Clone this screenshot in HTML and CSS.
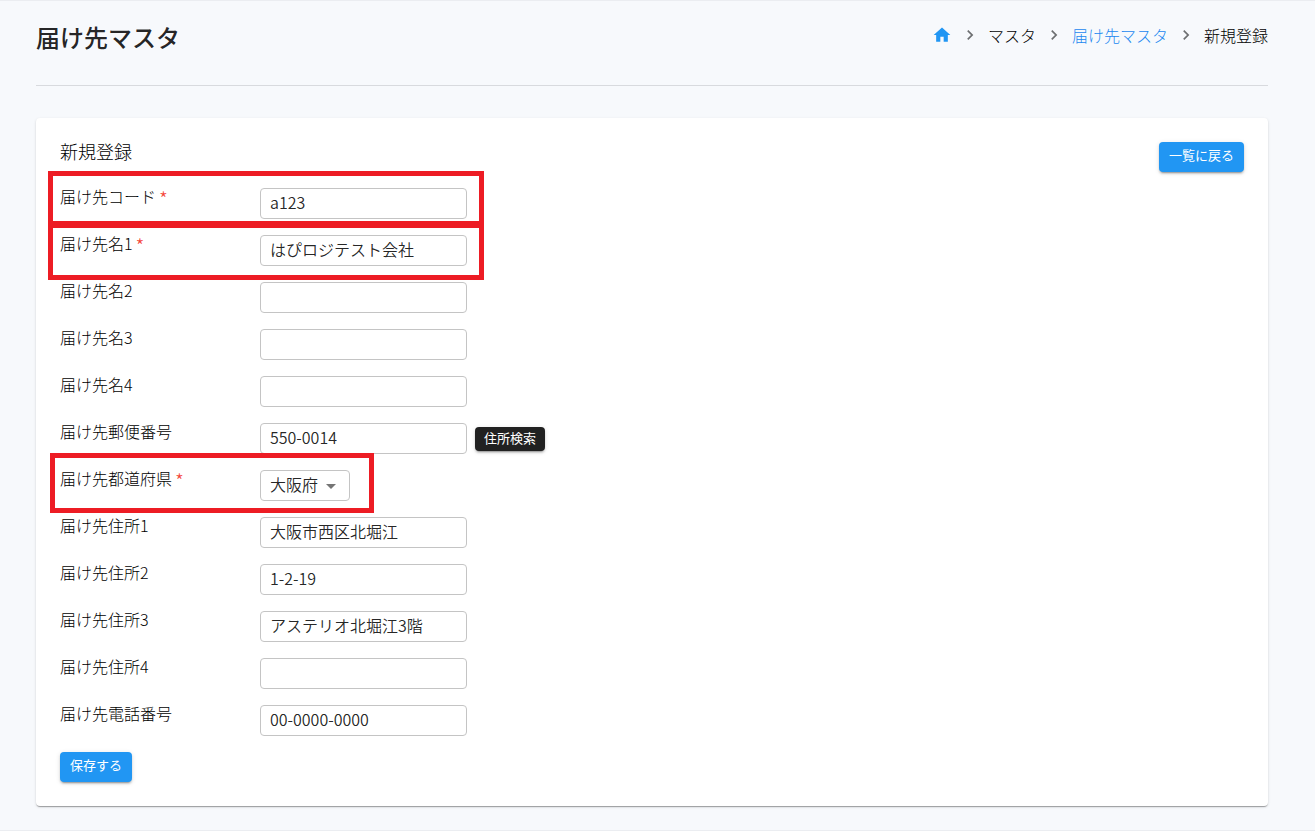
FILE: index.html
```html
<!DOCTYPE html>
<html lang="ja">
<head>
<meta charset="utf-8">
<meta name="viewport" content="width=device-width, initial-scale=1">
<title>届け先マスタ</title>
<link rel="stylesheet" href="styles.css">
</head>
<body>
<div class="page">
  <header class="page-header">
    <h1 class="page-title">届け先マスタ</h1>
    <nav class="breadcrumbs" aria-label="breadcrumb">
      <a class="crumb-link" href="#" aria-label="ホーム"><svg class="icon" viewBox="0 0 24 24"><path d="M10 20v-6h4v6h5v-8h3L12 3 2 12h3v8z"/></svg></a>
      <svg class="icon separator" viewBox="0 0 24 24"><path d="M10 6L8.59 7.41 13.17 12l-4.58 4.59L10 18l6-6z"/></svg>
      <span>マスタ</span>
      <svg class="icon separator" viewBox="0 0 24 24"><path d="M10 6L8.59 7.41 13.17 12l-4.58 4.59L10 18l6-6z"/></svg>
      <a class="crumb-link" href="#">届け先マスタ</a>
      <svg class="icon separator" viewBox="0 0 24 24"><path d="M10 6L8.59 7.41 13.17 12l-4.58 4.59L10 18l6-6z"/></svg>
      <span>新規登録</span>
    </nav>
  </header>
  <main class="card">
    <div class="card-header">
      <h2 class="card-title">新規登録</h2>
      <button class="button" type="button">一覧に戻る</button>
    </div>
    <form class="form">
      <div class="row marked marked-code">
        <label class="label" for="code">届け先コード<span class="required">*</span></label>
        <input class="field" id="code" type="text" value="a123">
      </div>
      <div class="row marked marked-name">
        <label class="label" for="name1">届け先名1<span class="required">*</span></label>
        <input class="field" id="name1" type="text" value="はぴロジテスト会社">
      </div>
      <div class="row">
        <label class="label" for="name2">届け先名2</label>
        <input class="field" id="name2" type="text">
      </div>
      <div class="row">
        <label class="label" for="name3">届け先名3</label>
        <input class="field" id="name3" type="text">
      </div>
      <div class="row">
        <label class="label" for="name4">届け先名4</label>
        <input class="field" id="name4" type="text">
      </div>
      <div class="row">
        <label class="label" for="zip">届け先郵便番号</label>
        <input class="field" id="zip" type="text" value="550-0014">
        <button class="button button-dark" type="button">住所検索</button>
      </div>
      <div class="row marked marked-pref">
        <label class="label" for="pref">届け先都道府県<span class="required">*</span></label>
        <div class="select">
          <select class="field select-field" id="pref"><option>大阪府</option></select>
          <svg class="select-arrow" viewBox="0 0 24 24"><path d="M7 10l5 5 5-5z"/></svg>
        </div>
      </div>
      <div class="row">
        <label class="label" for="addr1">届け先住所1</label>
        <input class="field" id="addr1" type="text" value="大阪市西区北堀江">
      </div>
      <div class="row">
        <label class="label" for="addr2">届け先住所2</label>
        <input class="field" id="addr2" type="text" value="1-2-19">
      </div>
      <div class="row">
        <label class="label" for="addr3">届け先住所3</label>
        <input class="field" id="addr3" type="text" value="アステリオ北堀江3階">
      </div>
      <div class="row">
        <label class="label" for="addr4">届け先住所4</label>
        <input class="field" id="addr4" type="text">
      </div>
      <div class="row">
        <label class="label" for="tel">届け先電話番号</label>
        <input class="field" id="tel" type="text" value="00-0000-0000">
      </div>
      <button class="button" type="submit">保存する</button>
    </form>
  </main>
</div>
</body>
</html>
```
FILE: styles.css
```css
*,
*::after {
  box-sizing: border-box;
}

body {
  margin: 0;
  background: #f7f9fc;
  color: rgba(0, 0, 0, 0.87);
  font-family: "Noto Sans CJK JP", sans-serif;
  font-size: 16px;
  font-weight: 300;
  line-height: 24px;
}

.page {
  padding: 17px 47px 24px 36px;
  border-top: 1px solid #ebedf1;
  border-bottom: 1px solid #ebedf1;
}

.page-header {
  display: flex;
  justify-content: space-between;
  align-items: flex-start;
  padding-bottom: 29px;
  margin-bottom: 32px;
  border-bottom: 1px solid #d8dade;
}

.page-title {
  margin: 0;
  font-size: 24px;
  font-weight: 500;
  line-height: 38px;
}

.breadcrumbs {
  display: flex;
  align-items: center;
  gap: 8px;
  padding-top: 5px;
  color: #000;
}

.crumb-link {
  display: flex;
  color: #1c88f0;
  text-decoration: none;
}

.icon {
  width: 20px;
  height: 20px;
  fill: currentColor;
}

.crumb-link .icon {
  color: #2196f3;
}

.separator {
  color: #6d6f71;
}

.card {
  padding: 24px;
  border-radius: 4px;
  background: #fff;
  box-shadow: 0 2px 1px -1px rgba(0, 0, 0, 0.2), 0 1px 1px rgba(0, 0, 0, 0.14), 0 1px 3px rgba(0, 0, 0, 0.12);
}

.card-header {
  display: flex;
  justify-content: space-between;
  align-items: flex-start;
  margin-bottom: 16px;
}

.card-title {
  margin: 0;
  color: #000;
  font-size: 18px;
  font-weight: 300;
  line-height: 18px;
}

.form {
  display: flex;
  flex-direction: column;
  align-items: flex-start;
  gap: 16px;
}

.row {
  display: flex;
  align-items: flex-start;
  color: #000;
}

.label {
  width: 200px;
  line-height: 16px;
}

.required {
  margin-left: 3px;
  color: #f44336;
  font-size: 20px;
  line-height: 0;
  vertical-align: -4px;
}

.field {
  width: 207px;
  height: 31px;
  padding: 0 9px 3px;
  border: 1px solid #c4c4c4;
  border-radius: 4px;
  background: #fff;
  color: rgba(0, 0, 0, 0.87);
  font: inherit;
  font-weight: 350;
}

.select {
  display: flex;
  position: relative;
}

.select-field {
  width: 90px;
  appearance: none;
}

.select-arrow {
  position: absolute;
  top: 4px;
  right: 7px;
  width: 24px;
  height: 24px;
  fill: #757575;
  pointer-events: none;
}

.button {
  height: 30px;
  padding: 0 10px 4px;
  border: 0;
  border-radius: 4px;
  background: #2196f3;
  box-shadow: 0 3px 1px -2px rgba(0, 0, 0, 0.2), 0 2px 2px rgba(0, 0, 0, 0.14), 0 1px 5px rgba(0, 0, 0, 0.12);
  color: #fff;
  font-family: inherit;
  font-size: 13px;
  font-weight: 400;
  line-height: 20px;
}

.button-dark {
  align-self: center;
  height: 24px;
  margin-left: 8px;
  padding: 0 9px 2px;
  background: #212121;
}

/* Red frames drawn over the required rows */
.marked {
  position: relative;
}

.marked::after {
  content: "";
  position: absolute;
  left: -12px;
  width: 436px;
  border: 5px solid #ed1c24;
  pointer-events: none;
}

.marked-code::after {
  top: -17px;
  bottom: -7px;
}

.marked-name::after {
  top: -12px;
  bottom: -14px;
}

.marked-pref::after {
  top: -17px;
  bottom: -12px;
  left: -10px;
  width: 324px;
}
```
